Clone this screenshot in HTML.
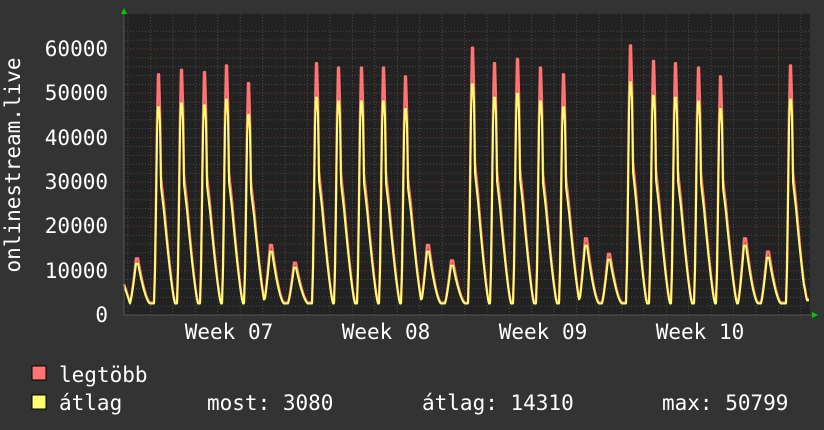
<!DOCTYPE html>
<html><head><meta charset="utf-8"><style>
html,body{margin:0;padding:0;background:#333;}
svg{display:block}
text{font-family:"DejaVu Sans Mono","Liberation Mono",monospace;fill:#fff;font-size:21px}
</style></head><body>
<svg id="s" width="824" height="430" xmlns="http://www.w3.org/2000/svg">
<rect width="824" height="430" fill="#333"/>
<rect x="124" y="14" width="686" height="301" fill="#222"/>
<g id="grid"></g>
<path id="mx" fill="none" stroke="#ff7373" stroke-width="2.4" stroke-linejoin="round"/>
<path id="av" fill="none" stroke="#ffff70" stroke-width="2" stroke-linejoin="round"/>
<line x1="124" y1="315" x2="812" y2="315" stroke="#555" stroke-width="1"/>
<line x1="124" y1="12" x2="124" y2="315" stroke="#555" stroke-width="1"/>
<polygon points="121,14 127,14 124,8" fill="#0c0"/>
<polygon points="812,312 812,318 818,315" fill="#0c0"/>
<g text-anchor="end">
<text x="108" y="56">60000</text>
<text x="108" y="100">50000</text>
<text x="108" y="145">40000</text>
<text x="108" y="189">30000</text>
<text x="108" y="233">20000</text>
<text x="108" y="278">10000</text>
<text x="108" y="322">0</text>
</g>
<g text-anchor="middle">
<text x="229" y="339">Week 07</text>
<text x="386" y="339">Week 08</text>
<text x="543" y="339">Week 09</text>
<text x="700" y="339">Week 10</text>
</g>
<text transform="translate(20,165) rotate(-90)" text-anchor="middle">onlinestream.live</text>
<rect x="32" y="366" width="14" height="14" fill="#ff7373" stroke="#000" stroke-width="1"/>
<rect x="32" y="395" width="14" height="14" fill="#ffff70" stroke="#000" stroke-width="1"/>
<text x="59" y="382">legtöbb</text>
<text x="59" y="410">átlag</text>
<text x="207" y="410">most: 3080</text>
<text x="422" y="410">átlag: 14310</text>
<text x="662" y="410">max: 50799</text>
</svg>
<script>
var g=document.getElementById('grid'),h='';
function Y(v){return 315-v*266/60000;}
for(var v=2000;v<=64000;v+=2000){var y=Y(v);if(y<14)break;
 h+='<line x1="124" x2="810" y1="'+y.toFixed(1)+'" y2="'+y.toFixed(1)+'" stroke="'+(v%10000==0?'#6a3a3a':'#4a4a4a')+'" stroke-dasharray="1,2"/>';}
for(var x=128;x<810;x+=22.43){var maj=Math.abs(((x-150)/157)-Math.round((x-150)/157))<0.02;
 h+='<line y1="14" y2="318" x1="'+x.toFixed(1)+'" x2="'+x.toFixed(1)+'" stroke="'+(maj?'#6a3a3a':'#4a4a4a')+'" stroke-dasharray="1,2"/>';}
g.innerHTML=h;
var peaks=[[137,13],[158,54.5],[181,55.5],[204,55],[226,56.5],[248,52.5],[271,16],[295,12],[316,57],[338,56],[361,56],[383,56],[405,54],[428,16],[452,12.5],[472,60.5],[494,57],[517,58],[540,56],[563,54.5],[586,17.5],[609,14],[630,61],[653,57.5],[675,57],[698,56],[720,54],[745,17.5],[768,14.5],[790,56.5]];
function f(t,big){
 if(!big){ if(t<-7||t>13)return 0; if(t<-1)return Math.pow((t+7)/6,1.3); if(t<1)return 1; return Math.pow(1-(t-1)/12,1.6);}
 if(t<-3.5||t>17)return 0;
 if(t<-1.5)return (t+3.5)/2*0.6;
 if(t<-0.5)return 0.6+(t+1.5)*0.4;
 if(t<1.5)return 1;
 if(t<3)return 1-(t-1.5)/1.5*0.45;
 if(t<6)return 0.55-(t-3)/3*0.12;
 return Math.max(0,0.43*Math.pow(1-(t-6)/11,1.3));
}
var dm='',da='';
for(var x=124;x<=809;x+=1){
 var m=0,a=0;
 for(var i=0;i<peaks.length;i++){var p=peaks[i],big=p[1]>30;var ff=f(x-p[0],big);
  var mv=ff*(p[1]*1000-3000);m=Math.max(m,mv);
  var av=big?(ff>0.9?ff*0.86:ff*0.93):ff*0.9;a=Math.max(a,av*(p[1]*1000-3000));}
 var base=2800;
 if(x<130) base=2800+(130-x)*700;
 if(x>804) base=3500;
 dm+=(x==124?'M':'L')+x+','+Y(base+m).toFixed(1);
 da+=(x==124?'M':'L')+x+','+Y(base+a-200).toFixed(1);
}
document.getElementById('mx').setAttribute('d',dm);
document.getElementById('av').setAttribute('d',da);
</script>
</body></html>
